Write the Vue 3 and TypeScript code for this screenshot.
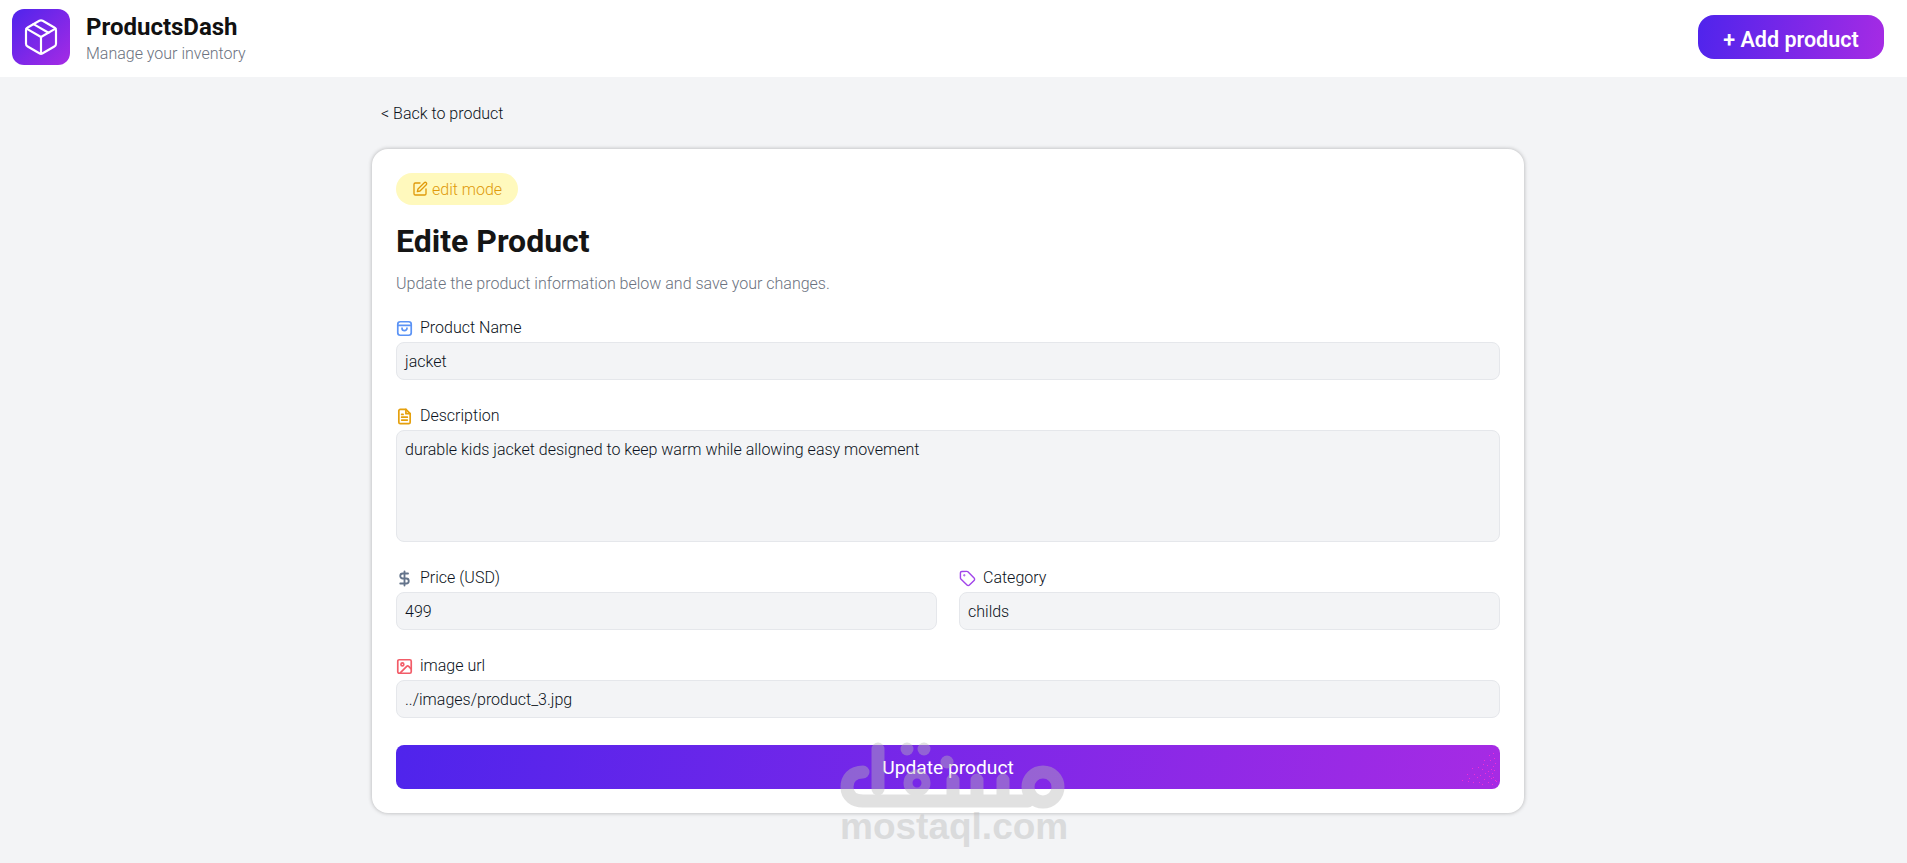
<template>
  <div class="page">
    <header class="topbar">
      <div class="brand">
        <div class="logo">
          <svg viewBox="0 0 24 24" width="40" height="40" fill="none" stroke="#fff" stroke-width="1.3" stroke-linecap="round" stroke-linejoin="round">
            <path d="M21 8a2 2 0 0 0-1-1.73l-7-4a2 2 0 0 0-2 0l-7 4A2 2 0 0 0 3 8v8a2 2 0 0 0 1 1.73l7 4a2 2 0 0 0 2 0l7-4A2 2 0 0 0 21 16Z" />
            <path d="m3.3 7 8.7 5 8.7-5" />
            <path d="M12 22V12" />
            <path d="m7.5 4.27 9 5.15" />
          </svg>
        </div>
        <div class="brand-text">
          <div class="brand-name">ProductsDash</div>
          <div class="brand-sub">Manage your inventory</div>
        </div>
      </div>
      <button class="add-btn">+ Add product</button>
    </header>

    <main class="content">
      <a class="back">&lt; Back to product</a>
      <section class="card">
        <span class="badge">
          <svg viewBox="0 0 24 24" width="16" height="16" fill="none" stroke="currentColor" stroke-width="2" stroke-linecap="round" stroke-linejoin="round">
            <path d="M12 3H5a2 2 0 0 0-2 2v14a2 2 0 0 0 2 2h14a2 2 0 0 0 2-2v-7" />
            <path d="M18.4 2.6a2.1 2.1 0 0 1 3 3L12 15l-4 1 1-4Z" />
          </svg>
          edit mode
        </span>
        <h1>Edite Product</h1>
        <p class="lead">Update the product information below and save your changes.</p>

        <div class="field">
          <label>
            <svg class="blue" viewBox="0 0 24 24" width="17" height="17" fill="none" stroke="currentColor" stroke-width="2.4" stroke-linecap="round" stroke-linejoin="round">
              <rect x="2.5" y="2.5" width="19" height="19" rx="3.5" />
              <path d="M2.5 7.5h19" />
              <path d="M8.5 11.5a3.5 3.5 0 0 0 7 0" />
            </svg>
            Product Name
          </label>
          <div class="input">jacket</div>
        </div>

        <div class="field">
          <label>
            <svg class="amber" viewBox="0 0 24 24" width="17" height="17" fill="none" stroke="currentColor" stroke-width="2.4" stroke-linecap="round" stroke-linejoin="round">
              <path d="M14 2H6a2 2 0 0 0-2 2v16a2 2 0 0 0 2 2h12a2 2 0 0 0 2-2V8Z" />
              <path d="M14 2v6h6" />
              <path d="M8 13h8M8 17h8M8 9h2" />
            </svg>
            Description
          </label>
          <div class="input area">durable kids jacket designed to keep warm while allowing easy movement</div>
        </div>

        <div class="two">
          <div class="field">
            <label>
              <svg class="slate" viewBox="0 0 24 24" width="17" height="17" fill="none" stroke="currentColor" stroke-width="2.6" stroke-linecap="round" stroke-linejoin="round">
                <path d="M12 2v20" />
                <path d="M17 5H9.5a3.5 3.5 0 0 0 0 7h5a3.5 3.5 0 0 1 0 7H6" />
              </svg>
              Price (USD)
            </label>
            <div class="input">499</div>
          </div>
          <div class="field">
            <label>
              <svg class="violet" viewBox="0 0 24 24" width="17" height="17" fill="none" stroke="currentColor" stroke-width="2" stroke-linecap="round" stroke-linejoin="round">
                <path d="M12.6 2.6A2 2 0 0 0 11.2 2H4a2 2 0 0 0-2 2v7.2a2 2 0 0 0 .6 1.4l8.7 8.7a2.4 2.4 0 0 0 3.4 0l6.6-6.6a2.4 2.4 0 0 0 0-3.4Z" />
                <circle cx="7.5" cy="7.5" r=".5" fill="currentColor" />
              </svg>
              Category
            </label>
            <div class="input">childs</div>
          </div>
        </div>

        <div class="field">
          <label>
            <svg class="red" viewBox="0 0 24 24" width="17" height="17" fill="none" stroke="currentColor" stroke-width="2.4" stroke-linecap="round" stroke-linejoin="round">
              <rect x="2.5" y="2.5" width="19" height="19" rx="2" />
              <circle cx="9" cy="9" r="2" />
              <path d="m21 15-3.1-3.1a2 2 0 0 0-2.8 0L6 21" />
            </svg>
            image url
          </label>
          <div class="input">../images/product_3.jpg</div>
        </div>

        <button class="submit">
          Update product
          <svg class="specks" viewBox="0 -7 44 44" width="44" height="44">
            <rect v-for="(s, i) in specks" :key="i" :x="s[0]" :y="s[1]" width="1" height="1" fill="#f02fd8" />
          </svg>
        </button>
      </section>
    </main>

    <div class="watermark">
      <svg viewBox="0 0 228 66" width="228" height="66" fill="none" stroke="#b8b8b8" stroke-width="13" stroke-linecap="round">
        <path d="M23 30C12 30 7 37 7 45c0 9 7 14 16 14h165" />
        <circle cx="203" cy="45" r="15" />
        <path d="M38 7v40" />
        <circle cx="77" cy="41" r="9" stroke-width="9" />
        <path d="M113 38v18M137 38v18M163 38v18" />
        <g fill="#b8b8b8" stroke="none">
          <circle cx="67" cy="7" r="6.5" />
          <circle cx="84" cy="7" r="6.5" />
          <circle cx="107" cy="20" r="6.5" />
        </g>
      </svg>
      <div class="wm-text">mostaql.com</div>
    </div>
  </div>
</template>

<script setup lang="ts">
const specks: number[][] = [
  [37, 1], [33, 3], [38, 6], [28, 8], [34, 8], [39, 11], [27, 12], [31, 13], [37, 14],
  [22, 15], [16, 16], [26, 17], [35, 17], [38, 18], [32, 19], [29, 21], [36, 21], [11, 22],
  [18, 22], [24, 23], [33, 24], [37, 25], [21, 25], [13, 26], [28, 27], [35, 26], [39, 28],
  [6, 28], [12, 29], [17, 30], [23, 30], [32, 30], [36, 32], [40, 29], [26, 32]
];
</script>

<style>
html,
body {
  margin: 0;
  background: #f3f4f6;
}
</style>

<style scoped>
.page {
  position: relative;
  height: 863px;
  overflow: hidden;
  background: #f3f4f6;
  font-family: Roboto, "Noto Sans", sans-serif;
  font-weight: 300;
  color: #0b1220;
}

.topbar {
  display: flex;
  align-items: center;
  justify-content: space-between;
  height: 77px;
  padding: 0 23px 3px 12px;
  background: #fff;
  box-sizing: border-box;
}

.brand {
  display: flex;
  align-items: center;
  gap: 16px;
}

.logo {
  display: flex;
  align-items: center;
  justify-content: center;
  width: 58px;
  height: 56px;
  border-radius: 12px;
  background: linear-gradient(135deg, #4f24ec, #a62be4);
}

.brand-text {
  padding-top: 3px;
}

.brand-name {
  font-size: 24px;
  font-weight: 700;
  line-height: 28px;
  color: #111;
}

.brand-sub {
  margin-top: 2px;
  font-size: 16px;
  line-height: 22px;
  color: #6b7280;
}

.add-btn {
  width: 186px;
  height: 44px;
  padding: 4px 0 0;
  border: none;
  border-radius: 16px;
  background: linear-gradient(100deg, #4f24ec, #a62be4);
  color: #fff;
  font: 600 21.5px Roboto, sans-serif;
}

.content {
  width: 1152px;
  margin-left: 372px;
}

.back {
  display: block;
  margin: 27px 0 0 9px;
  font-size: 16px;
  line-height: 20px;
}

.card {
  margin-top: 25px;
  padding: 24px;
  box-sizing: border-box;
  background: #fff;
  border-radius: 16px;
  box-shadow: 0 0 4px rgba(0, 0, 0, 0.28);
}

.badge {
  display: inline-flex;
  align-items: center;
  gap: 4px;
  height: 32px;
  padding: 0 16px;
  box-sizing: border-box;
  border-radius: 16px;
  background: #fff9bd;
  color: #e09a0a;
  font-size: 16px;
  vertical-align: top;
}

h1 {
  margin: 17px 0 0;
  font-size: 32px;
  font-weight: 700;
  line-height: 38px;
  color: #151515;
}

.lead {
  margin: 14px 0 -2px;
  font-size: 16px;
  line-height: 20px;
  color: #6b7280;
}

.field {
  margin-top: 25px;
}

label {
  display: flex;
  align-items: center;
  gap: 7px;
  padding-top: 1px;
  font-size: 16px;
  line-height: 20px;
  margin-bottom: 4px;
}

.blue {
  color: #5b93f5;
}
.amber {
  color: #e5a00d;
}
.slate {
  color: #64748b;
}
.violet {
  color: #a145ea;
}
.red {
  color: #f25c68;
}

.input {
  height: 38px;
  padding: 1px 8px 0;
  box-sizing: border-box;
  border: 1px solid #e5e7eb;
  border-radius: 8px;
  background: #f3f4f6;
  font-size: 16px;
  line-height: 36px;
}

.area {
  height: 112px;
  line-height: 18px;
  padding-top: 10px;
}

.two {
  display: grid;
  grid-template-columns: 1fr 1fr;
  gap: 22px;
}

.submit {
  position: relative;
  display: block;
  width: 100%;
  height: 44px;
  margin-top: 27px;
  border: none;
  border-radius: 8px;
  background: linear-gradient(100deg, #4f24ec, #a62be4);
  color: #fff;
  font: 400 19.2px Roboto, sans-serif;
}

.specks {
  position: absolute;
  right: 0;
  bottom: 0;
}

.watermark {
  position: absolute;
  left: 840px;
  top: 742px;
  width: 228px;
  pointer-events: none;
  opacity: 0.41;
}

.watermark svg {
  display: block;
  overflow: visible;
}

.wm-text {
  margin-top: -3px;
  font: 700 37px "Liberation Sans", sans-serif;
  line-height: 44px;
  color: #b8b8b8;
  text-align: center;
  white-space: nowrap;
}
</style>
